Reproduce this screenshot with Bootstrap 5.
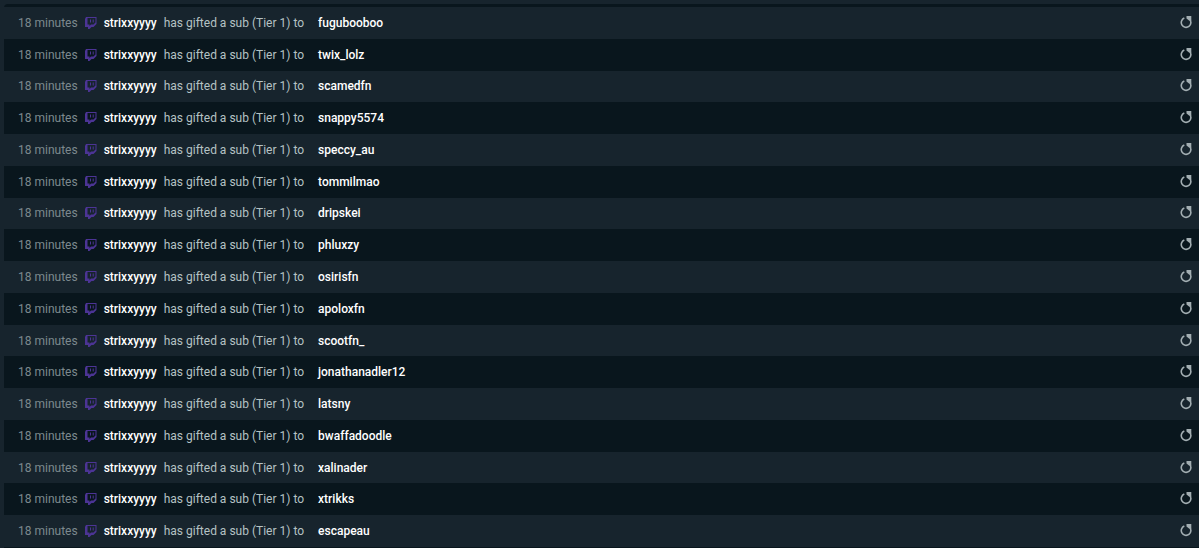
<!DOCTYPE html>
<html lang="en">
<head>
<meta charset="utf-8">
<meta name="viewport" content="width=device-width, initial-scale=1">
<title>Recent events</title>
<link href="https://cdn.jsdelivr.net/npm/bootstrap@5.3.0/dist/css/bootstrap.min.css" rel="stylesheet">
<style>
  body { background: #17242d; color: #b5c2c4; font-family: Roboto, "Liberation Sans", sans-serif; font-size: 12px; line-height: 16px; }
  .feed { background: #09161d; border-radius: 4px 0 0 0; padding: 3px 0 1px; }
  .event { padding: 0 7px 0 14px; white-space: nowrap; }
  .event:nth-child(odd) { background: #17242d; }
  .event-time { color: #7c898e; }
  .event-icon { width: 12px; height: 12px; margin: 0 7px 0 7px; fill: #4c3495; }
  .event strong { color: #fff; font-weight: 500; }
  .event-text { margin: 0 14px 0 7px; }
  .replay { color: #a3aeb2; line-height: 0; }
  .replay svg { width: 12px; height: 14px; }
</style>
</head>
<body>
<svg class="d-none" aria-hidden="true">
  <symbol id="twitch" viewBox="0 0 12 12"><path fill-rule="evenodd" d="M1 0h10.500v7L8.500 10H6.500l-2 2H3v-2H0V2zM2.500 1v6.500H4.500V9L6 7.500h2.500l2-2V1zM5 2.500h1v3H5zM7.700 2.500h1v3h-1z"/></symbol>
  <symbol id="again" viewBox="0 0 12 14"><path d="M4.300 2.100A4.800 4.800 0 1 0 9.500 3.200" fill="none" stroke="currentColor" stroke-width="1.600"/><path d="M6.500 0h4.800v4.800L9 4.500 6.500 2.600z" fill="currentColor"/></symbol>
</svg>
<main class="vh-100 d-flex flex-column ps-1 pt-1">
  <ul class="feed list-unstyled mb-0 d-flex flex-column flex-grow-1" id="feed"></ul>
</main>
<template id="event-row">
  <li class="event d-flex align-items-center flex-fill">
    <span class="event-time">18 minutes</span>
    <svg class="event-icon flex-shrink-0" role="img" aria-label="Twitch"><use href="#twitch"/></svg>
    <strong>strixxyyyy</strong>
    <span class="event-text">has gifted a sub (Tier 1) to</span>
    <strong class="recipient"></strong>
    <button type="button" class="replay btn border-0 p-0 ms-auto" aria-label="Replay event"><svg><use href="#again"/></svg></button>
  </li>
</template>
<script src="https://cdn.jsdelivr.net/npm/bootstrap@5.3.0/dist/js/bootstrap.bundle.min.js"></script>
<script>
  const recipients = ["fugubooboo", "twix_lolz", "scamedfn", "snappy5574", "speccy_au", "tommilmao", "dripskei", "phluxzy", "osirisfn", "apoloxfn", "scootfn_", "jonathanadler12", "latsny", "bwaffadoodle", "xalinader", "xtrikks", "escapeau"];
  const template = document.getElementById("event-row");
  for (const name of recipients) {
    const row = template.content.cloneNode(true);
    row.querySelector(".recipient").textContent = name;
    document.getElementById("feed").append(row);
  }
</script>
</body>
</html>
